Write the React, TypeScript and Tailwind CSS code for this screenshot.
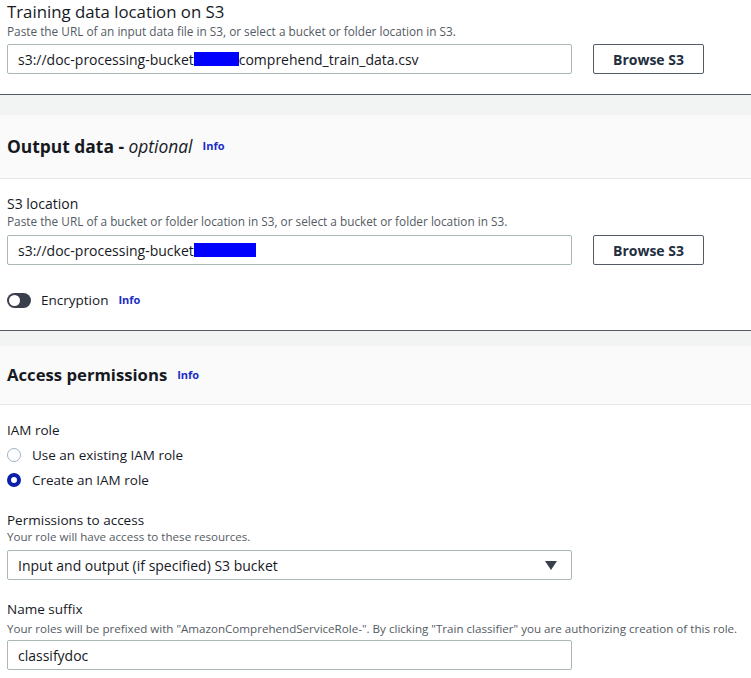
import React from 'react';

const font = { fontFamily: '"Open Sans", "Noto Sans", Arial, sans-serif' };

const Info: React.FC = () => (
  <span className="text-[11px] font-bold text-[#1b2cc8] ml-[10px]">Info</span>
);

const Input: React.FC<{ children: React.ReactNode }> = ({ children }) => (
  <div className="w-[565px] h-[30px] border border-[#aab7b8] rounded-[2px] flex items-center px-[10px] text-[14px] text-[#16191f]">
    {children}
  </div>
);

const BrowseButton: React.FC = () => (
  <button className="w-[111px] h-[30px] border border-[#545b64] rounded-[2px] text-[14px] font-bold text-[#232f3e] bg-white">
    Browse S3
  </button>
);

const SectionHeader: React.FC<{ band: string; head: string; children: React.ReactNode }> = ({ band, head, children }) => (
  <div>
    <div className={`border-t border-[#545b64] bg-[#f2f3f3] ${band}`} />
    <div className={`bg-[#fafafa] border-b border-[#e6e8e8] flex items-center px-[7px] ${head}`}>
      {children}
    </div>
  </div>
);

const Redact: React.FC<{ w: string }> = ({ w }) => (
  <span className={`inline-block h-[14px] bg-[#0000ff] ${w}`} />
);

const Label: React.FC<{ children: React.ReactNode }> = ({ children }) => (
  <div className="text-[13.5px] leading-[18px] text-[#16191f]">{children}</div>
);

const Hint: React.FC<{ className?: string; children: React.ReactNode }> = ({ className = '', children }) => (
  <div className={`text-[11.6px] leading-[14px] text-[#545b64] ${className}`}>{children}</div>
);

export default function App() {
  return (
    <div className="w-[751px] h-[678px] bg-white overflow-hidden" style={font}>
      {/* Training data */}
      <div className="px-[7px] pt-[2px] pb-[20px]">
        <div className="text-[16.8px] leading-[20px] text-[#16191f]">Training data location on S3</div>
        <div className="text-[11.8px] leading-[15px] text-[#545b64] mt-[2px]">
          Paste the URL of an input data file in S3, or select a bucket or folder location in S3.
        </div>
        <div className="flex items-center gap-[21px] mt-[5px]">
          <Input>
            <span>s3://doc-processing-bucket</span>
            <Redact w="w-[45px]" />
            <span>comprehend_train_data.csv</span>
          </Input>
          <BrowseButton />
        </div>
      </div>

      <SectionHeader band="h-[21px]" head="h-[64px]">
        <span className="text-[17.4px] font-bold text-[#16191f]">
          Output data - <span className="font-normal italic">optional</span>
        </span>
        <Info />
      </SectionHeader>

      {/* Output data */}
      <div className="px-[7px] pt-[16px] pb-[21px]">
        <div className="text-[14px] leading-[18px] text-[#16191f]">S3 location</div>
        <Hint className="mt-[1px] text-[11.8px]">
          Paste the URL of a bucket or folder location in S3, or select a bucket or folder location in S3.
        </Hint>
        <div className="flex items-center gap-[21px] mt-[7px]">
          <Input>
            <span>s3://doc-processing-bucket</span>
            <Redact w="w-[62px]" />
          </Input>
          <BrowseButton />
        </div>
        <div className="flex items-center h-[18px] mt-[26px]">
          <span className="w-[24px] h-[15px] rounded-full bg-[#3a3f4c] relative">
            <span className="absolute left-[2px] top-[2px] w-[11px] h-[11px] rounded-full bg-white" />
          </span>
          <span className="ml-[10px] text-[13.5px] text-[#16191f]">Encryption</span>
          <Info />
        </div>
      </div>

      <SectionHeader band="h-[16px]" head="h-[59px]">
        <span className="text-[16.7px] font-bold text-[#16191f]">Access permissions</span>
        <Info />
      </SectionHeader>

      {/* Access permissions */}
      <div className="px-[7px] pt-[16px]">
        <Label>IAM role</Label>
        <div className="flex items-center h-[18px] mt-[7px]">
          <span className="w-[14px] h-[14px] rounded-full border border-[#9fb3c2]" />
          <span className="ml-[11px] text-[13.5px] text-[#16191f]">Use an existing IAM role</span>
        </div>
        <div className="flex items-center h-[18px] mt-[7px]">
          <span className="w-[14px] h-[14px] rounded-full border-[4px] border-[#0b1fa8]" />
          <span className="ml-[11px] text-[13.5px] text-[#16191f]">Create an IAM role</span>
        </div>

        <div className="mt-[22px]">
          <Label>Permissions to access</Label>
          <Hint className="mt-[1px]">Your role will have access to these resources.</Hint>
          <div className="mt-[6px] w-[565px] h-[30px] border border-[#aab7b8] rounded-[2px] flex items-center justify-between px-[10px] text-[14px] text-[#16191f]">
            <span>Input and output (if specified) S3 bucket</span>
            <svg width="12" height="9" viewBox="0 0 12 9" className="mr-[4px]">
              <path d="M0 0 H12 L6 9 Z" fill="#3a3f4c" />
            </svg>
          </div>
        </div>

        <div className="mt-[20px]">
          <Label>Name suffix</Label>
          <Hint className="mt-[4px]">
            Your roles will be prefixed with "AmazonComprehendServiceRole-". By clicking "Train classifier" you are authorizing creation of this role.
          </Hint>
          <div className="mt-[4px]">
            <Input>
              <span>classifydoc</span>
            </Input>
          </div>
        </div>
      </div>
    </div>
  );
}
